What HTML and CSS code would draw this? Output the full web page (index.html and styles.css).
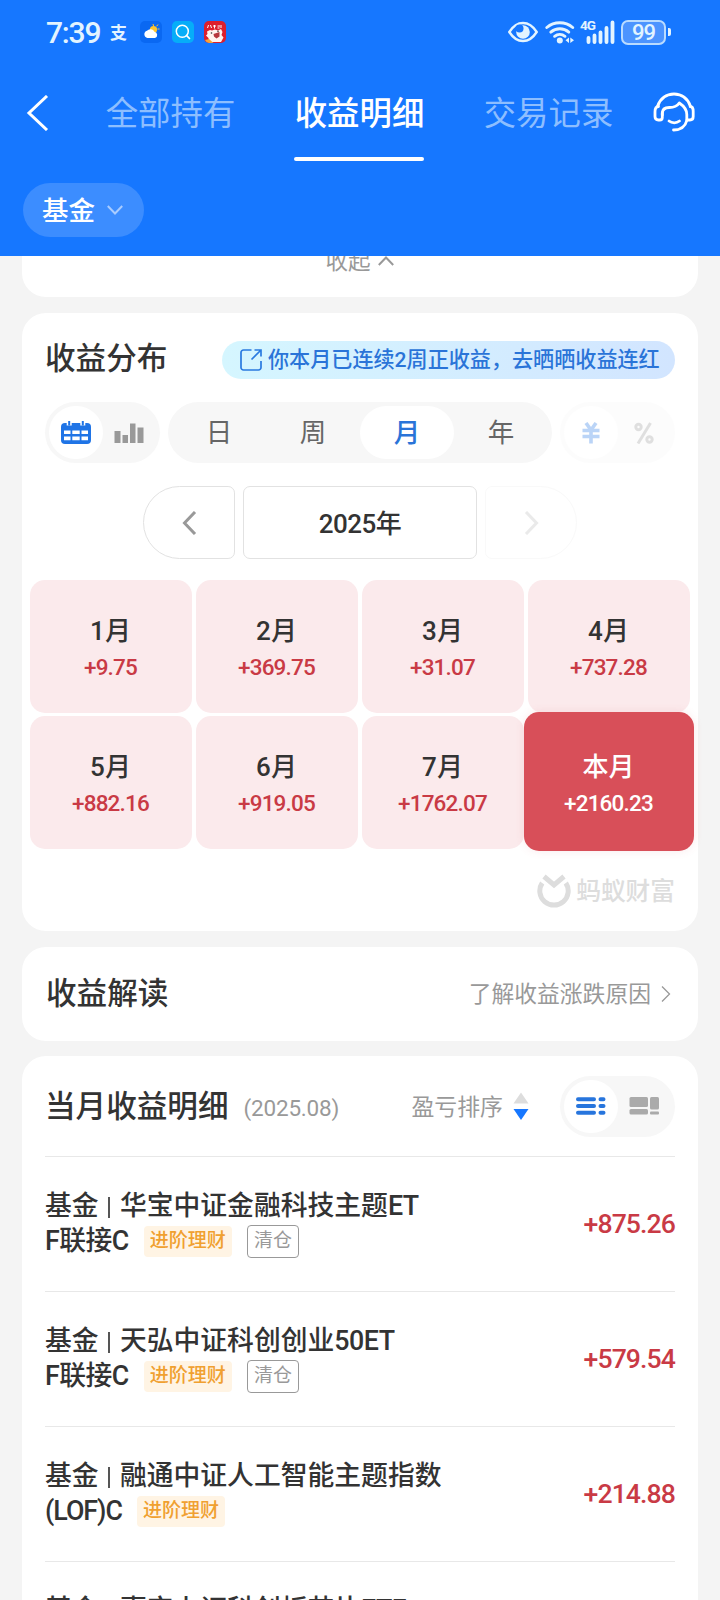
FILE: index.html
```
<!DOCTYPE html>
<html lang="zh-CN">
<head>
    <meta charset="UTF-8">
    <title>收益明细</title>
    <link rel="stylesheet" href="styles.css">
</head>
<body>

<div class="page">
    <header class="header">
        <div class="status-bar">
            <span class="time">7:39</span>
            <div class="notify">
                <span class="zhi">支</span>
                <svg width="22" height="22" viewBox="0 0 22 22">
                    <rect width="22" height="22" rx="5" fill="#0a68f2"/>
                    <path d="M13 3l.6 2M18 3.500l-1.400 1.800M19.500 8h-2" stroke="#ffc62e" stroke-width="1"/>
                    <circle cx="13.500" cy="8.500" r="3.600" fill="#ffc62e"/>
                    <path d="M7.500 17a3.700 3.700 0 0 1-.5-7.200 4.500 4.500 0 0 1 7.500 1A3.200 3.200 0 0 1 15 17z" fill="#fff"/>
                </svg>
                <svg width="22" height="22" viewBox="0 0 22 22">
                    <rect width="22" height="22" rx="5" fill="#06adf8"/>
                    <circle cx="10.300" cy="10.300" r="6" fill="none" stroke="#fff" stroke-width="1.500"/>
                    <path d="M14.700 14.700l2.800 2.800" stroke="#fff" stroke-width="1.700" stroke-linecap="round"/>
                </svg>
                <svg width="22" height="22" viewBox="0 0 22 22">
                    <rect width="22" height="22" rx="5" fill="#dc1f2e"/>
                    <path d="M3.500 7l1-3M6.500 4l1 3M9 5h3M10.500 4v3.500M13.500 5h2.500M17 4v3M13.500 7h2" stroke="#fff" stroke-width="1"/>
                    <path d="M3 10.500l3-1.500 2 .5 3-1 3 1 3-1.500 1.500 3-1 3 2 2.500-2.500 4.500H5l-.5-4L2 14.500l1.500-1.500z" fill="#fff4ef"/>
                    <path d="M9.500 13l6-2v4.500l-3 2-2.500-2z" fill="#b6373c"/>
                    <circle cx="7.500" cy="12" r=".8" fill="#333"/>
                    <circle cx="14" cy="10.300" r=".8" fill="#333"/>
                    <path d="M1 19l4-1 4.500 4H5a5 5 0 0 1-4-3z" fill="#f6a43a"/>
                </svg>
            </div>
            <div class="status-icons">
                <svg width="30" height="22" viewBox="0 0 30 22">
                    <path d="M1.300 11Q7 2 15 2t13.700 9Q23 20 15 20T1.300 11z" fill="none" stroke="#e3f4ff" stroke-width="2.400"/>
                    <circle cx="15" cy="11" r="6.800" fill="#e3f4ff"/>
                    <circle cx="11.500" cy="7.500" r="4" fill="#1677ff"/>
                </svg>
                <svg class="wifi" width="30" height="24" viewBox="0 0 30 24">
                    <g fill="none" stroke="#e3f4ff" stroke-width="2.900" stroke-linecap="round">
                        <path d="M1.800 7.500a20 20 0 0 1 25.900 0"/>
                        <path d="M5.800 12.100a14 14 0 0 1 18 0"/>
                        <path d="M9.600 16.300a8.500 8.500 0 0 1 10.400 0"/>
                    </g>
                    <circle cx="14.800" cy="20.600" r="3" fill="#e3f4ff"/>
                    <path d="M24 17.500v5.500l-3.500-2.700zM25.300 17.500v5.500l3.700-2.700z" fill="#e3f4ff"/>
                </svg>
                <div class="signal">
                    <span class="net">4G</span>
                    <svg width="33" height="24" viewBox="0 0 33 24">
                        <path d="M6.500 18v4M12.500 15.500v6.500M18.500 12.500v9.500M24.500 8v14M30.500 2.500v19.500" stroke="#e3f4ff" stroke-width="3.800" stroke-linecap="round"/>
                    </svg>
                </div>
                <span class="battery">99</span>
                <span class="battery-tip"></span>
            </div>
        </div>

        <nav class="nav">
            <svg class="back" width="24" height="36" viewBox="0 0 24 36">
                <path d="M22 1L4 18l18 17" fill="none" stroke="#fff" stroke-width="3"/>
            </svg>
            <div class="tabs">
                <span class="tab">全部持有</span>
                <span class="tab active">收益明细</span>
                <span class="tab">交易记录</span>
            </div>
            <svg class="service" width="42" height="40" viewBox="0 0 42 40">
                <g fill="none" stroke="#fff" stroke-width="2.800" stroke-linecap="round" stroke-linejoin="round">
                    <path d="M4.500 14.500C7 6.500 13.500 2 21 2s14 4.500 16.500 12.500"/>
                    <path d="M9.300 20.500v5c0 1.500-1 2.500-2.500 2.500h-1.500C3 28 2 26.500 2 24.500v-4.500c0-3.500 1-5.500 3.500-5.500"/>
                    <path d="M9.300 23v-1.500c0-4 2.500-6 7-6 4.500 0 8-1.500 10-4.500 4.500 3 7.500 7 7.500 11.500V28"/>
                    <path d="M34.500 28h2.500c2 0 3.200-1.500 3.200-3.500v-5c0-3-1-5-3-5"/>
                    <path d="M34 28c-1.500 6-6 10-13.500 10"/>
                    <path d="M16 29c3 2.400 7.500 2.400 10.500 0"/>
                </g>
            </svg>
        </nav>

        <div class="filter">
            <span>基金</span>
            <svg width="16" height="10" viewBox="0 0 16 10"><path d="M.8 1L8 8.500 15.200 1" fill="none" stroke="#a9ccff" stroke-width="2"/></svg>
        </div>
    </header>

    <section class="card collapse-card">
        <span>收起</span>
        <svg width="16" height="10" viewBox="0 0 16 10"><path d="M.8 9L8 1.500 15.200 9" fill="none" stroke="#999" stroke-width="2"/></svg>
    </section>

    <!-- 收益分布 -->
    <section class="card dist-card">
        <div class="dist-head">
            <h2>收益分布</h2>
            <a class="banner">
                <svg width="22" height="22" viewBox="0 0 22 22">
                    <g fill="none" stroke="#2a7ae0" stroke-width="1.700">
                        <path d="M11.500 1H3.500A2.500 2.500 0 0 0 1 3.500v15A2.500 2.500 0 0 0 3.500 21h15a2.500 2.500 0 0 0 2.500-2.500V12"/>
                        <path d="M11.500 10.500L21 1M14.500 1H21v6.500"/>
                    </g>
                </svg>
                <span>你本月已连续2周正收益，去晒晒收益连红</span>
            </a>
        </div>

        <div class="switches">
            <div class="switch">
                <span class="switch-item on">
                    <svg width="30" height="24" viewBox="0 0 30 24">
                        <rect y="2" width="30" height="21" rx="4" fill="#1f74e6"/>
                        <path d="M8.200 0v4.500M21.800 0v4.500" stroke="#fff" stroke-width="5"/>
                        <path d="M8.200 0v4.500M21.800 0v4.500" stroke="#1f74e6" stroke-width="2"/>
                        <path d="M3 9.500h6.500V13H3zM11.300 9.500h7.400V13h-7.400zM20.500 9.500H27V13h-6.500zM3 15.500h6.500v3.700H3zM11.300 15.500h7.400v3.700h-7.400zM20.500 15.500H27v3.700h-6.500z" fill="#fff"/>
                    </svg>
                </span>
                <span class="switch-item">
                    <svg width="30" height="20" viewBox="0 0 30 20">
                        <path d="M.5 8h6v12h-6zM8.500 12h5.500v8H8.500zM16 .5h5.500V20H16zM23.500 4.500h6V20h-6z" fill="#999"/>
                    </svg>
                </span>
            </div>
            <div class="period">
                <span>日</span>
                <span>周</span>
                <span class="on">月</span>
                <span>年</span>
            </div>
            <div class="switch disabled">
                <span class="switch-item on">
                    <svg width="18" height="22" viewBox="0 0 18 22">
                        <path d="M4 1l5 7 5-7M.5 8.500h17M.5 14.500h17M9 8v13.500" fill="none" stroke="#1f74e6" stroke-width="3.600"/>
                    </svg>
                </span>
                <span class="switch-item">
                    <svg width="20" height="22" viewBox="0 0 20 22">
                        <g fill="none" stroke="#999" stroke-width="3">
                            <circle cx="4.500" cy="5" r="2.700"/>
                            <circle cx="15.500" cy="17.500" r="2.700"/>
                            <path d="M16.500 1L4 21.500"/>
                        </g>
                    </svg>
                </span>
            </div>
        </div>

        <div class="year-nav">
            <span class="year-btn prev">
                <svg width="15" height="24" viewBox="0 0 15 24"><path d="M13 1L2.500 12 13 23" fill="none" stroke="#999" stroke-width="3"/></svg>
            </span>
            <span class="year">2025年</span>
            <span class="year-btn next">
                <svg width="15" height="24" viewBox="0 0 15 24"><path d="M2 1l10.500 11L2 23" fill="none" stroke="#999" stroke-width="3"/></svg>
            </span>
        </div>

        <div class="months">
            <div class="month"><b>1月</b><span>+9.75</span></div>
            <div class="month"><b>2月</b><span>+369.75</span></div>
            <div class="month"><b>3月</b><span>+31.07</span></div>
            <div class="month"><b>4月</b><span>+737.28</span></div>
            <div class="month"><b>5月</b><span>+882.16</span></div>
            <div class="month"><b>6月</b><span>+919.05</span></div>
            <div class="month"><b>7月</b><span>+1762.07</span></div>
            <div class="month current"><b>本月</b><span>+2160.23</span></div>
        </div>

        <div class="watermark">
            <svg width="34" height="36" viewBox="0 0 34 36">
                <g fill="none" stroke="#ddd" stroke-width="5">
                    <path d="M5.200 9a14.200 14.200 0 1 0 23.600 0"/>
                    <path d="M7 2.500l10 8.500 10-8.500"/>
                </g>
            </svg>
            <span>蚂蚁财富</span>
        </div>
    </section>

    <!-- 收益解读 -->
    <section class="card read-card">
        <h2>收益解读</h2>
        <a class="read-link">
            <span>了解收益涨跌原因</span>
            <svg width="10" height="16" viewBox="0 0 10 16"><path d="M1 .5L8.500 8 1 15.500" fill="none" stroke="#999" stroke-width="1.300"/></svg>
        </a>
    </section>

    <!-- 当月收益明细 -->
    <section class="card detail-card">
        <div class="detail-head">
            <h2>当月收益明细</h2>
            <span class="detail-date">(2025.08)</span>
            <span class="sort">盈亏排序</span>
            <svg class="sort-icon" width="16" height="28" viewBox="0 0 16 28">
                <path d="M8 .5L15.500 11.500H.5z" fill="#ddd"/>
                <path d="M8 28L.5 17h15z" fill="#1677ff"/>
            </svg>
            <div class="switch">
                <span class="switch-item on">
                    <svg width="30" height="18" viewBox="0 0 30 18">
                        <path d="M2 2.200h16M2 9h16M2 15.800h16M24.500 2.200h3M24.500 9h3M24.500 15.800h3" stroke="#2775dd" stroke-width="4" stroke-linecap="round"/>
                    </svg>
                </span>
                <span class="switch-item">
                    <svg width="30" height="18" viewBox="0 0 30 18" fill="#aaa">
                        <rect x=".5" width="18.500" height="10" rx="1.500"/>
                        <rect x=".5" y="12" width="18.500" height="5.500" rx="1.500"/>
                        <rect x="21" width="9" height="12.500" rx="1.500"/>
                        <rect x="21" y="14.500" width="9" height="3" rx="1"/>
                    </svg>
                </span>
            </div>
        </div>

        <div class="fund">
            <div class="fund-name">
                <div>基金 <i></i> 华宝中证金融科技主题<em>ET</em></div>
                <div class="line"><em>F联接C</em><span class="tag">进阶理财</span><span class="tag gray">清仓</span></div>
            </div>
            <span class="amount">+875.26</span>
        </div>
        <div class="fund">
            <div class="fund-name">
                <div>基金 <i></i> 天弘中证科创创业<em>50ET</em></div>
                <div class="line"><em>F联接C</em><span class="tag">进阶理财</span><span class="tag gray">清仓</span></div>
            </div>
            <span class="amount">+579.54</span>
        </div>
        <div class="fund">
            <div class="fund-name">
                <div>基金 <i></i> 融通中证人工智能主题指数</div>
                <div class="line"><em class="tight">(LOF)C</em><span class="tag">进阶理财</span></div>
            </div>
            <span class="amount">+214.88</span>
        </div>
        <div class="fund">
            <div class="fund-name">
                <div>基金 <i></i> 嘉实上证科创板芯片<em>ETF</em></div>
                <div class="line"></div>
            </div>
        </div>
    </section>
</div>

</body>
</html>
```

FILE: styles.css
```
* {
    box-sizing: border-box;
}
body {
    margin: 0;
    background-color: #f4f4f4;
    font-family: Roboto, "Noto Sans CJK SC", sans-serif;
    color: #333;
}
svg {
    display: block;
    flex: none;
}
h2 {
    margin: 0;
    padding-top: 2px;
    font-size: 30.600px;
    font-weight: 500;
    line-height: 40px;
    white-space: nowrap;
}
.page {
    width: 720px;
    height: 1600px;
    overflow: hidden;
}

/* 顶部 */
.header {
    height: 256px;
    background-color: #1677ff;
    color: #fff;
}
.status-bar {
    display: flex;
    align-items: center;
    height: 64px;
    padding: 0 49px 0 46px;
    color: #e3f4ff;
}
.time {
    width: 64px;
    font-size: 30px;
    font-weight: 500;
    letter-spacing: -1.200px;
}
.notify {
    display: flex;
    align-items: center;
    gap: 10px;
}
.zhi {
    width: 20px;
    padding-bottom: 2px;
    font-size: 17px;
    font-weight: 700;
}
.status-icons {
    display: flex;
    align-items: center;
    margin-left: auto;
}
.wifi {
    margin-left: 7px;
}
.signal {
    position: relative;
    margin-left: 7px;
}
.net {
    position: absolute;
    left: -2px;
    top: -1px;
    font-size: 13.500px;
    font-weight: 700;
    line-height: 13px;
    letter-spacing: -1px;
}
.battery {
    width: 45px;
    height: 25px;
    margin-left: 6px;
    border: 2px solid #b9dbff;
    border-radius: 7px;
    background-color: #4c94ff;
    font-size: 22px;
    font-weight: 500;
    line-height: 22px;
    text-align: center;
    letter-spacing: -1px;
}
.battery-tip {
    width: 3px;
    height: 8px;
    margin-left: 2px;
    border-radius: 0 2px 2px 0;
    background-color: #e3f4ff;
}
.nav {
    display: flex;
    height: 97px;
    padding: 0 25px 0 25px;
}
.back {
    margin-top: 31px;
}
.tabs {
    display: flex;
    gap: 58px;
    margin-left: 56px;
}
.tab {
    width: 131px;
    height: 97px;
    padding-top: 26px;
    font-size: 32.400px;
    line-height: 48px;
    text-align: center;
    white-space: nowrap;
    color: #8dbeff;
}
.tab.active {
    position: relative;
    font-weight: 500;
    color: #fff;
}
.tab.active::after {
    content: "";
    position: absolute;
    left: 0;
    bottom: 0;
    width: 130px;
    height: 4px;
    border-radius: 2px;
    background-color: #fff;
}
.service {
    margin: 28px 0 0 auto;
}
.filter {
    display: flex;
    align-items: center;
    gap: 12px;
    width: 121px;
    height: 54px;
    margin: 22px 0 0 23px;
    padding-left: 19px;
    border-radius: 27px;
    background-color: #3c8dff;
    font-size: 26.500px;
    font-weight: 500;
}
.filter span {
    padding-bottom: 3px;
}

/* 卡片 */
.card {
    margin: 0 22px 16px;
    border-radius: 24px;
    background-color: #fff;
}
.collapse-card {
    display: flex;
    justify-content: center;
    gap: 7px;
    height: 41px;
    padding-right: 1px;
    border-radius: 0 0 24px 24px;
    overflow: hidden;
    color: #999;
    font-size: 22.600px;
    line-height: 30px;
}
.collapse-card span {
    margin-top: -9px;
}
.dist-card {
    height: 618px;
    padding: 24px 23px 0;
}
.dist-head {
    display: flex;
    justify-content: space-between;
    height: 65px;
}
.banner {
    display: flex;
    align-items: center;
    gap: 6px;
    width: 453px;
    height: 38px;
    margin-top: 4px;
    padding-left: 18px;
    border-radius: 19px;
    background: linear-gradient(90deg, #d5f6ff, #d2e5ff);
    color: #2a74d8;
    font-size: 21.100px;
    font-weight: 500;
    white-space: nowrap;
}
.banner span {
    padding-bottom: 4px;
}
.switches {
    display: flex;
    justify-content: space-between;
}
.switch {
    display: flex;
    width: 115px;
    height: 61px;
    padding: 4px;
    border-radius: 31px;
    background-color: #f7f7f7;
}
.switch-item {
    display: flex;
    align-items: center;
    justify-content: center;
    width: 54px;
    height: 53px;
    border-radius: 27px;
}
.switch-item.on {
    background-color: #fff;
}
.disabled {
    opacity: 0.3;
}
.period {
    display: flex;
    width: 384px;
    height: 61px;
    padding: 4px;
    border-radius: 31px;
    background-color: #f7f7f7;
    color: #666;
    font-size: 26.500px;
    line-height: 54px;
    text-align: center;
}
.period span {
    flex: 1;
    border-radius: 27px;
}
.period .on {
    background-color: #fff;
    color: #2a74d8;
    font-weight: 500;
}
.year-nav {
    display: flex;
    justify-content: center;
    gap: 8px;
    margin-top: 23px;
}
.year-btn {
    display: flex;
    align-items: center;
    justify-content: center;
    width: 92px;
    height: 73px;
    border: 1px solid #e2e2e2;
}
.prev {
    border-radius: 37px 7px 7px 37px;
}
.next {
    border-radius: 7px 37px 37px 7px;
    opacity: 0.2;
}
.year {
    width: 234px;
    height: 73px;
    border: 1px solid #e2e2e2;
    border-radius: 7px;
    font-size: 26px;
    font-weight: 500;
    line-height: 74px;
    letter-spacing: -0.500px;
    text-align: center;
}
.months {
    display: grid;
    grid-template-columns: repeat(4, 162px);
    grid-auto-rows: 133px;
    gap: 3px 4px;
    margin: 21px -15px 0;
}
.month {
    display: flex;
    flex-direction: column;
    align-items: center;
    padding: 33px 1px 0 0;
    border-radius: 15px;
    background-color: #fbeaec;
}
.month b {
    font-size: 26px;
    font-weight: 500;
    line-height: 36px;
}
.month span {
    font-size: 22.500px;
    font-weight: 500;
    line-height: 36px;
    letter-spacing: -0.800px;
    color: #c93a45;
}
.month.current {
    margin: -4px -4px -2px;
    padding-top: 37px;
    background-color: #d84f59;
    box-shadow: 0 0 10px rgba(216, 79, 89, 0.12);
    color: #fff;
}
.month.current span {
    color: #fff;
}
.watermark {
    display: flex;
    align-items: center;
    justify-content: flex-end;
    gap: 5px;
    margin-top: 25px;
    color: #ddd;
    font-size: 24.700px;
    font-weight: 500;
    line-height: 36px;
}
.read-card {
    display: flex;
    align-items: center;
    justify-content: space-between;
    height: 94px;
    margin-bottom: 15px;
    padding: 0 27px 3px 24px;
}
.read-link {
    display: flex;
    align-items: center;
    gap: 10px;
    padding-top: 3px;
    color: #999;
    font-size: 22.800px;
}
.read-link span {
    padding-bottom: 4px;
}

/* 明细列表 */
.detail-card {
    padding: 0 23px;
}
.detail-head {
    display: flex;
    align-items: center;
    height: 100px;
}
.detail-date {
    margin: 4px auto 0 15px;
    color: #999;
    font-size: 22.500px;
    letter-spacing: -0.200px;
}
.sort {
    padding-bottom: 2px;
    color: #999;
    font-size: 22.900px;
}
.sort-icon {
    margin: 0 31px 0 10px;
}
.fund {
    display: flex;
    align-items: center;
    justify-content: space-between;
    height: 134.850px;
    border-top: 1px solid #e8e8e8;
}
.fund-name {
    font-size: 26.800px;
    font-weight: 500;
    line-height: 35px;
    white-space: nowrap;
}
.fund-name em {
    font-style: normal;
    letter-spacing: -0.500px;
}
.fund-name em.tight {
    letter-spacing: -1px;
}
.fund-name i {
    display: inline-block;
    width: 2px;
    height: 21px;
    margin: 0 3px;
    background-color: #555;
    vertical-align: -3px;
}
.line {
    display: flex;
    align-items: center;
    height: 35px;
}
.tag {
    height: 31px;
    margin-left: 15px;
    padding: 0 6px;
    border-radius: 4px;
    background-color: #fff4e4;
    color: #f0a030;
    font-size: 19px;
    line-height: 30px;
}
.tag.gray {
    height: 33px;
    border: 1px solid #999;
    background-color: #fff;
    color: #999;
    font-weight: 400;
}
.amount {
    color: #c93a45;
    font-size: 26.600px;
    font-weight: 500;
    letter-spacing: -0.900px;
}
```
